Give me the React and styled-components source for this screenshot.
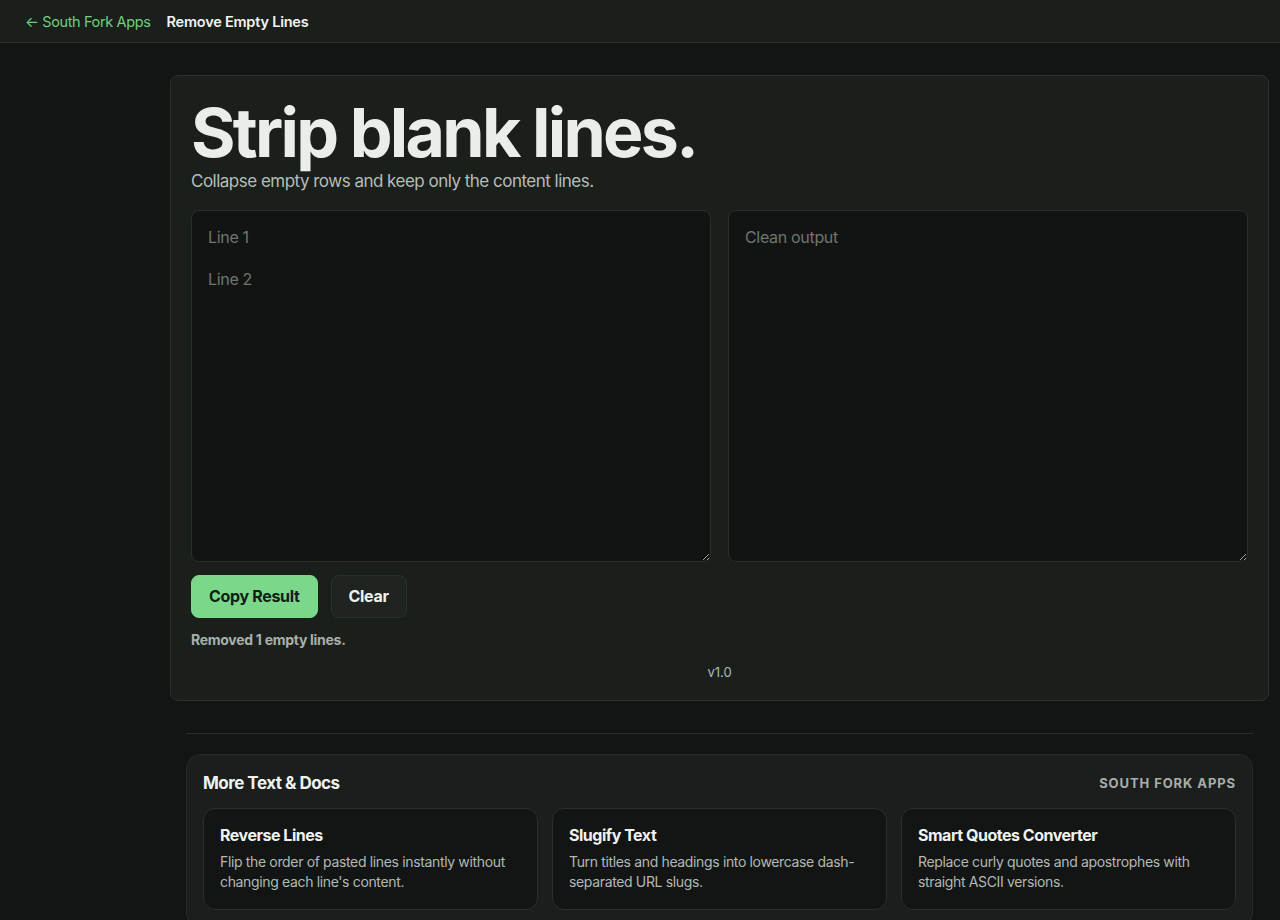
import React, { useState } from "react"
import styled, { createGlobalStyle } from "styled-components"

const GlobalStyle = createGlobalStyle`
  * {
    box-sizing: border-box;
  }

  body {
    margin: 0;
    background: #121513;
    color: #e8ebe8;
    font-family: Inter, "Noto Sans", sans-serif;
  }
`

const tools = [
  {
    title: "Reverse Lines",
    text: "Flip the order of pasted lines instantly without changing each line's content.",
  },
  {
    title: "Slugify Text",
    text: "Turn titles and headings into lowercase dash-separated URL slugs.",
  },
  {
    title: "Smart Quotes Converter",
    text: "Replace curly quotes and apostrophes with straight ASCII versions.",
  },
]

const TopBar = styled.header`
  display: flex;
  align-items: center;
  gap: 16px;
  height: 43px;
  padding: 0 25px;
  background: #1b1f1c;
  border-bottom: 1px solid #2a302b;
  font-size: 14.5px;
  letter-spacing: -0.025em;
`

const BackLink = styled.a`
  color: #6fcf7f;
  text-decoration: none;
`

const Crumb = styled.span`
  color: #f2f4f2;
  font-weight: 600;
  letter-spacing: -0.015em;
`

const Main = styled.main`
  display: flex;
  flex-direction: column;
  padding: 32px 11px 0 170px;
`

const Card = styled.section`
  display: flex;
  flex-direction: column;
  padding: 20px;
  background: #1b1f1c;
  border: 1px solid #2a302b;
  border-radius: 8px;
`

const Title = styled.h1`
  margin: 0;
  font-size: 68px;
  line-height: 1.07;
  font-weight: 700;
  letter-spacing: -0.04em;
  color: #ebedeb;
`

const Lead = styled.p`
  margin: 2px 0 19px;
  font-size: 17px;
  letter-spacing: -0.03em;
  color: #b6bdb7;
`

const Panes = styled.div`
  display: grid;
  grid-template-columns: 1fr 1fr;
  gap: 17px;
`

const Pane = styled.textarea`
  height: 352px;
  padding: 16px;
  resize: vertical;
  background: #121413;
  border: 1px solid #2a302b;
  border-radius: 8px;
  color: #e8ebe8;
  font-family: inherit;
  font-size: 16px;
  line-height: 21px;
  letter-spacing: -0.02em;
  outline: none;

  &::placeholder {
    color: #6f7570;
  }
`

const Actions = styled.div`
  display: flex;
  gap: 13px;
  margin-top: 13px;
`

const Button = styled.button`
  height: 43px;
  padding: 0 17px;
  border-radius: 8px;
  border: 1px solid ${p => (p.$primary ? "#7bd88a" : "#2a302b")};
  background: ${p => (p.$primary ? "#7bd88a" : "#202421")};
  color: ${p => (p.$primary ? "#102014" : "#f0f2f0")};
  font-family: inherit;
  font-size: 16px;
  font-weight: 700;
  letter-spacing: -0.02em;
  cursor: pointer;
`

const Status = styled.p`
  margin: 13px 0 0;
  font-size: 14px;
  font-weight: 700;
  letter-spacing: -0.02em;
  color: #a9b0aa;
`

const Version = styled.div`
  margin-top: 16px;
  text-align: center;
  font-size: 13px;
  color: #b3b8b4;
`

const Divider = styled.hr`
  margin: 32px 16px 20px;
  border: 0;
  border-top: 1px solid #253029;
`

const Related = styled.section`
  margin: 0 16px;
  padding: 18px 16px 16px;
  background: #1b1e1c;
  border: 1px solid #262b27;
  border-radius: 14px;
`

const RelatedHead = styled.div`
  display: flex;
  align-items: center;
  justify-content: space-between;
  margin-bottom: 15px;
`

const RelatedTitle = styled.h2`
  margin: 0;
  font-size: 17px;
  font-weight: 700;
  letter-spacing: -0.03em;
  color: #f0f2f0;
`

const Brand = styled.span`
  font-size: 13px;
  font-weight: 700;
  letter-spacing: 0.07em;
  text-transform: uppercase;
  color: #a7aea8;
`

const ToolGrid = styled.div`
  display: grid;
  grid-template-columns: repeat(3, 1fr);
  gap: 14px;
`

const ToolCard = styled.a`
  display: block;
  padding: 16px 16px 17px;
  background: #121513;
  border: 1px solid #2a302b;
  border-radius: 12px;
  text-decoration: none;
`

const ToolName = styled.h3`
  margin: 0 0 7px;
  font-size: 16px;
  font-weight: 700;
  letter-spacing: -0.03em;
  color: #f0f2f0;
`

const ToolText = styled.p`
  margin: 0;
  font-size: 14px;
  line-height: 20px;
  letter-spacing: -0.025em;
  color: #b3b9b4;
`

const App = () => {
  const [input, setInput] = useState("")
  const output = input
    .split("\n")
    .filter(line => line.trim() !== "")
    .join("\n")

  return (
    <>
      <GlobalStyle />
      <TopBar>
        <BackLink href="#">← South Fork Apps</BackLink>
        <Crumb>Remove Empty Lines</Crumb>
      </TopBar>
      <Main>
        <Card>
          <Title>Strip blank lines.</Title>
          <Lead>Collapse empty rows and keep only the content lines.</Lead>
          <Panes>
            <Pane
              value={input}
              onChange={e => setInput(e.target.value)}
              placeholder={"Line 1\n\nLine 2"}
            />
            <Pane value={output} readOnly placeholder="Clean output" />
          </Panes>
          <Actions>
            <Button $primary>Copy Result</Button>
            <Button onClick={() => setInput("")}>Clear</Button>
          </Actions>
          <Status>Removed 1 empty lines.</Status>
          <Version>v1.0</Version>
        </Card>
        <Divider />
        <Related>
          <RelatedHead>
            <RelatedTitle>More Text &amp; Docs</RelatedTitle>
            <Brand>South Fork Apps</Brand>
          </RelatedHead>
          <ToolGrid>
            {tools.map(tool => (
              <ToolCard key={tool.title} href="#">
                <ToolName>{tool.title}</ToolName>
                <ToolText>{tool.text}</ToolText>
              </ToolCard>
            ))}
          </ToolGrid>
        </Related>
      </Main>
    </>
  )
}

export default App
